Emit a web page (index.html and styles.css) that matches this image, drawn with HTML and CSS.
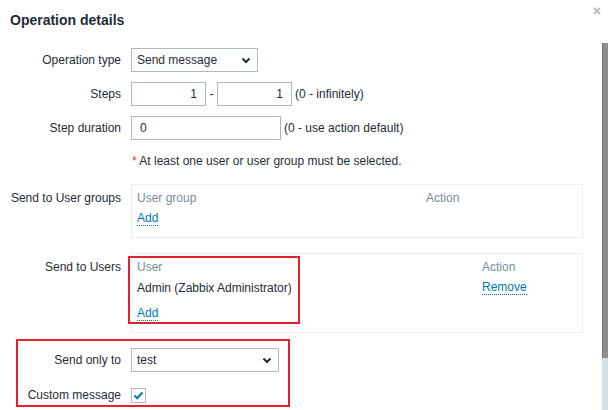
FILE: index.html
```html
<!DOCTYPE html>
<html>
<head>
<meta charset="utf-8">
<link rel="stylesheet" href="styles.css">
</head>
<body>
<div class="dialog">
  <div class="header">
    <h4 class="title">Operation details</h4>
    <button class="close" aria-label="Close">
      <svg width="8" height="8" viewBox="0 0 8 8"><path d="M1 1L7 7M7 1L1 7" stroke="#b3c0c7" stroke-width="2" fill="none"/></svg>
    </button>
  </div>
  <div class="main">
    <div class="content">
      <div class="row r1">
        <label class="lbl">Operation type</label>
        <div class="select w127">
          <span>Send message</span>
          <svg class="chev" width="10" height="7" viewBox="0 0 10 7"><path d="M1.5 1.5L5 5L8.5 1.5" stroke="#1f2c33" stroke-width="2" fill="none"/></svg>
        </div>
      </div>
      <div class="row r2">
        <label class="lbl">Steps</label>
        <div class="ctrl">
          <div class="input num w75">1</div>
          <span class="dash">-</span>
          <div class="input num w75">1</div>
          <span class="hint">(0 - infinitely)</span>
        </div>
      </div>
      <div class="row r3">
        <label class="lbl">Step duration</label>
        <div class="ctrl">
          <div class="input w150">0</div>
          <span class="hint">(0 - use action default)</span>
        </div>
      </div>
      <div class="row r4">
        <span class="lbl"></span>
        <div class="note"><span class="req">*</span> At least one user or user group must be selected.</div>
      </div>
      <div class="row r5">
        <label class="lbl top">Send to User groups</label>
        <div class="box">
          <div class="trow th"><span class="c1 g">User group</span><span class="c2 g">Action</span></div>
          <div class="trow"><a class="link">Add</a></div>
        </div>
      </div>
      <div class="row r6">
        <label class="lbl top">Send to Users</label>
        <div class="box users">
          <div class="trow th"><span class="c1u">User</span><span>Action</span></div>
          <div class="trow"><span class="c1u dark">Admin (Zabbix Administrator)</span><a class="link">Remove</a></div>
          <div class="trow addrow"><a class="link">Add</a></div>
          <div class="mark mark1"></div>
        </div>
      </div>
      <div class="group r7">
        <div class="row">
          <label class="lbl">Send only to</label>
          <div class="select w148">
            <span>test</span>
            <svg class="chev" width="10" height="7" viewBox="0 0 10 7"><path d="M1.5 1.5L5 5L8.5 1.5" stroke="#1f2c33" stroke-width="2" fill="none"/></svg>
          </div>
        </div>
        <div class="row r8">
          <label class="lbl">Custom message</label>
          <div class="ctrl">
            <span class="check">
              <svg width="13" height="13" viewBox="0 0 13 13"><path d="M2.5 6.5L5.2 9.2L10.5 3.5" stroke="#0275b8" stroke-width="2" fill="none"/></svg>
            </span>
          </div>
        </div>
        <div class="mark mark2"></div>
      </div>
    </div>
    <div class="scrollbar">
      <div class="thumb"></div>
      <div class="track"></div>
    </div>
  </div>
</div>
</body>
</html>
```
FILE: styles.css
```css
html, body {
  margin: 0;
  padding: 0;
  height: 410px;
  overflow: hidden;
  background: #ffffff;
}
body {
  font-family: "Liberation Sans", Arial, sans-serif;
  font-size: 12px;
  color: #1f2c33;
}
.dialog {
  display: flex;
  flex-direction: column;
  height: 410px;
}
.header {
  display: flex;
  justify-content: space-between;
  align-items: flex-start;
  height: 43px;
  flex: none;
}
.title {
  margin: 0;
  padding: 12px 0 0 10px;
  font-size: 14px;
  line-height: 17px;
  font-weight: bold;
  color: #1f2c33;
}
.close {
  border: 0;
  background: none;
  padding: 0;
  margin: 7px 7px 0 0;
  width: 8px;
  height: 8px;
  display: flex;
}
.main {
  display: flex;
  flex: 1;
  min-height: 0;
}
.content {
  flex: 1;
  min-width: 0;
}
.scrollbar {
  width: 6px;
  flex: none;
  display: flex;
  flex-direction: column;
}
.thumb {
  height: 315px;
  background: #8e8e8e;
  border-left: 1px solid #747474;
  box-sizing: border-box;
}
.track {
  flex: 1;
  background: #d5dee3;
}
.row {
  display: flex;
  align-items: center;
  gap: 10px;
}
.lbl {
  width: 121px;
  flex: none;
  text-align: right;
  line-height: 14px;
  white-space: nowrap;
}
.lbl.top {
  align-self: flex-start;
  padding-top: 7px;
}
.r1 { margin-top: 5px; }
.r2 { margin-top: 10px; }
.r3 { margin-top: 10px; }
.r4 { margin-top: 10px; height: 22px; }
.r5 { margin-top: 12px; align-items: flex-start; }
.r6 { margin-top: 15px; align-items: flex-start; }
.r7 { margin-top: 15px; }
.r8 { margin-top: 11px; height: 24px; }
.ctrl {
  display: flex;
  align-items: center;
}
.select, .input {
  box-sizing: border-box;
  height: 24px;
  border: 1px solid #acbbc2;
  background: #fff;
  display: flex;
  align-items: center;
  padding: 0 5px;
  color: #1f2c33;
}
.select {
  justify-content: space-between;
  padding-right: 6px;
}
.w127 { width: 127px; }
.w148 { width: 148px; }
.w75 { width: 75px; }
.w150 { width: 150px; padding-left: 8px; }
.num { justify-content: flex-end; padding-right: 8px; }
.dash { width: 11px; text-align: center; }
.hint { margin-left: 3px; }
.note { line-height: 22px; padding-left: 1px; }
.req { color: #e33734; }
.box {
  box-sizing: border-box;
  width: 452px;
  border: 1px solid #ebeef0;
  padding: 2px 5px 8px 5px;
  position: relative;
}
.trow {
  display: flex;
  height: 21px;
  align-items: center;
}
.th { color: #768d99; }
.c1 { width: 289px; }
.c1u { width: 345px; }
.dark { color: #1f2c33; }
.addrow { margin-top: 5px; }
.link {
  color: #0275b8;
  border-bottom: 1px dotted #0275b8;
  line-height: 14px;
  cursor: pointer;
}
.check {
  box-sizing: border-box;
  width: 15px;
  height: 15px;
  border: 1px solid #acbbc2;
  display: flex;
  align-items: center;
  justify-content: center;
}
.group { position: relative; }
.mark {
  position: absolute;
  box-sizing: border-box;
  border: 2px solid #e3202b;
  pointer-events: none;
}
.mark1 {
  left: -4px;
  top: 2px;
  width: 172px;
  height: 68px;
}
.mark2 {
  left: 16px;
  top: -9px;
  width: 274px;
  height: 68px;
}
```
